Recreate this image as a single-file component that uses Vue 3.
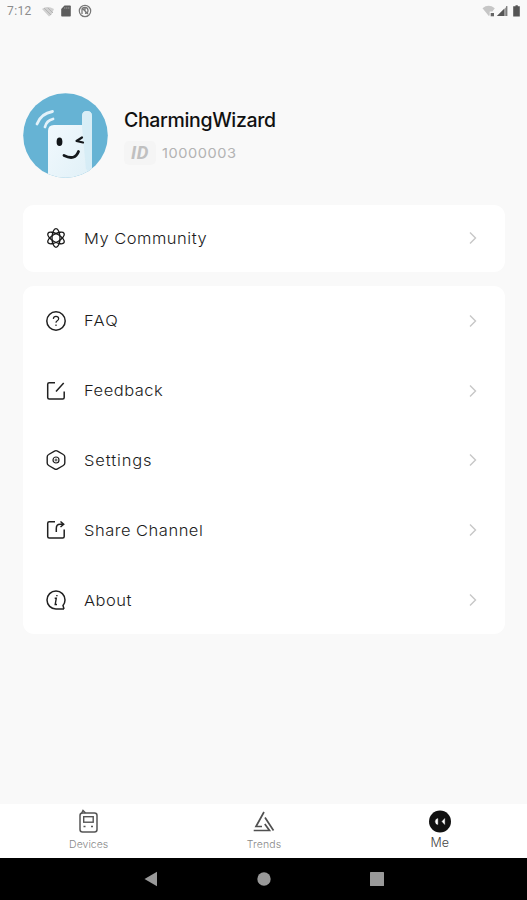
<script setup>
const items = [
  { key: 'faq', label: 'FAQ', width: 'w-faq' },
  { key: 'feedback', label: 'Feedback', width: 'w-feedback' },
  { key: 'settings', label: 'Settings', width: 'w-settings' },
  { key: 'share', label: 'Share Channel', width: 'w-share' },
  { key: 'about', label: 'About', width: 'w-about' },
]
</script>

<template>
  <div class="screen">
    <header class="status">
      <span class="time">7:12</span>
      <svg class="s-wifi" width="14" height="12" viewBox="0 0 14 12"><path d="M1 4Q6 0 13 4L10.500 9.500L8 11.500Z" fill="#d0d0d0" /><path d="M3 3l7 7M7 3l5 5" stroke="#b4b4b4" /></svg>
      <svg class="s-sd" width="10" height="12" viewBox="0 0 10 12"><path d="M3.500.500H9q.8 0 .8.8v9.400q0 .8-.8.8H1q-.8 0-.8-.8V4Z" fill="#5d5d5d" /><path d="M3.800 2v2M5.800 2v2M7.800 2v2" stroke="#999" stroke-width=".8" /></svg>
      <svg class="s-sync" width="14" height="14" viewBox="0 0 14 14" fill="none" stroke="#777"><circle cx="7" cy="7" r="5.700" stroke-width="1.200" /><path d="M4 10V5.500Q4 3.500 7 3.500t3 3-3 2.700M5 5l5 5M7 3v4" stroke-width="1.300" /></svg>
      <span class="spacer"></span>
      <svg width="41" height="14" viewBox="0 0 41 14">
        <path d="M.5 4.200Q6.500-.5 12.800 4.200L10.400 7.400H7.700v3.800L6.800 12Z" fill="#c6c6c6" />
        <rect x="8.700" y="9" width="3.300" height="3.300" fill="#666" />
        <path d="M15 12L25.300 2V12Z" fill="#999" /><path d="M15 12L22 5V12Z" fill="#555" /><path d="M24.700 2V12" stroke="#777" />
        <path d="M33.500 1.200h2.300v1h2V12.500h-6.600V2.200h2.300Z" fill="#555" />
      </svg>
    </header>

    <section class="profile">
      <svg class="avatar" width="85" height="85" viewBox="0 0 85 85">
        <defs>
          <clipPath id="disc"><circle cx="42.500" cy="42.500" r="42.300" /></clipPath>
          <linearGradient id="body" x1="0" y1="0" x2="1" y2="1"><stop offset="0" stop-color="#f3fafe" /><stop offset="1" stop-color="#e0f0f7" /></linearGradient>
        </defs>
        <g clip-path="url(#disc)">
          <path d="M0 0H85V85H0Z" fill="#66b3d4" />
          <path d="M25 38Q25 32 31 32H59V23Q59 18 64 18T69 23V85H25Z" fill="url(#body)" />
          <path d="M59 34V23Q59 18 64 18T69 23V82L63 76Z" fill="#d0e9f4" opacity=".65" />
        </g>
        <g fill="none" stroke="#e3f2fa" stroke-width="2.800" stroke-linecap="round"><path d="M14 31Q18 20.500 29.500 18.500M22 34Q23.500 27.500 30 26" /></g>
        <ellipse cx="36.500" cy="48.800" rx="2.900" ry="4.300" fill="#121619" />
        <g fill="none" stroke="#15191c" stroke-width="2.200" stroke-linecap="round" stroke-linejoin="round"><path d="M59 44.500L53.500 48L60 49.500" /><path d="M41 62.500Q52 68 55.500 58.500" stroke-width="2.800" /></g>
      </svg>
      <div class="who">
        <div class="name">CharmingWizard</div>
        <div class="idrow"><span class="badge">ID</span><span class="num">10000003</span></div>
      </div>
    </section>

    <main class="cards">
      <section class="card single">
        <div class="row">
          <svg class="icon" width="22" height="22" viewBox="0 0 22 22" fill="none" stroke="#171717" stroke-width="1.300">
            <ellipse cx="11" cy="11" rx="4" ry="9.300" /><ellipse cx="11" cy="11" rx="4" ry="9.300" transform="rotate(60 11 11)" /><ellipse cx="11" cy="11" rx="4" ry="9.300" transform="rotate(120 11 11)" />
          </svg>
          <span class="label w-community">My Community</span>
          <svg class="chevron" width="8" height="14" viewBox="0 0 8 14"><path d="M1 1.500L6.500 7L1 12.500" /></svg>
        </div>
      </section>
      <section class="card menu">
        <div v-for="item in items" :key="item.key" class="row">
          <svg class="icon" width="22" height="22" viewBox="0 0 22 22" fill="none" stroke="#202020" stroke-width="1.500">
            <template v-if="item.key === 'faq'">
              <circle cx="11" cy="11" r="9.200" /><path d="M8.300 8.900Q8.500 6.300 11 6.300T13.700 8.600Q13.700 10 12.300 10.700T11 12.800M11 14.500V16" stroke-width="1.200" />
            </template>
            <template v-else-if="item.key === 'feedback'">
              <path d="M10 2.700H4.200Q2.700 2.700 2.700 4.200V17.500Q2.700 19 4.200 19H17.700Q19.200 19 19.200 17.500V11.500M11 11.500L18.700 3" />
            </template>
            <template v-else-if="item.key === 'settings'">
              <path d="M9.500 2.100Q11 1.200 12.500 2.100L18.300 5.500Q19.800 6.300 19.800 8V14Q19.800 15.700 18.300 16.500L12.500 19.900Q11 20.800 9.500 19.900L3.700 16.500Q2.200 15.700 2.200 14V8Q2.200 6.300 3.700 5.500Z" stroke-width="1.400" /><circle cx="11" cy="11" r="3" stroke-width="1.200" /><path d="M11 9.500V12.500M9.500 11H12.500" stroke-width=".8" />
            </template>
            <template v-else-if="item.key === 'share'">
              <path d="M10 2.700H4.200Q2.700 2.700 2.700 4.200V17.500Q2.700 19 4.200 19H17.700Q19.200 19 19.200 17.500V10.500M11.300 13V9.500Q11.300 5.300 15 5.300H18M15.500 2.500L18.700 5.300L15.500 8" />
            </template>
            <template v-else>
              <path d="M19 20H11A9 9 0 1 1 20 11Q20 14 18 16.500L19 20" /><path d="M9.700 9.200H11.300L10.200 15.500H12M11.900 5.900V7.300" stroke-width="1.400" />
            </template>
          </svg>
          <span class="label" :class="item.width">{{ item.label }}</span>
          <svg class="chevron" width="8" height="14" viewBox="0 0 8 14"><path d="M1 1.500L6.500 7L1 12.500" /></svg>
        </div>
      </section>
    </main>

    <nav class="tabs">
      <div class="tab">
        <svg width="24" height="25" viewBox="0 0 24 25" fill="none" stroke="#555"><rect x="3" y="4" width="17" height="19" rx="2.500" stroke-width="1.500" /><path d="M4.500 4.500L6 1.500L8.500 4" stroke-width="1.400" /><rect x="6.700" y="7.700" width="9.500" height="5.500" stroke-width="1.400" /><path d="M6.500 17.500H8.500M14 17.500H16" stroke-width="1.500" /></svg>
        <span>Devices</span>
      </div>
      <div class="tab trends">
        <svg width="24" height="25" viewBox="0 0 24 25" fill="none" stroke="#505050" stroke-width="1.700"><path d="M12 3L4 17.500H10M1.700 21.500H17.500L12.800 15M13 8.500L21.500 21.500" /></svg>
        <span>Trends</span>
      </div>
      <div class="tab me">
        <svg width="24" height="25" viewBox="0 0 24 25"><circle cx="12" cy="12.500" r="11" fill="#111" /><path d="M9.800 9.500Q7.300 10 7.300 12.500T9.800 15.500ZM14 12.500L16.700 9.500V15.500Z" fill="#fff" stroke="#fff" stroke-width=".4" /></svg>
        <span>Me</span>
      </div>
    </nav>
    <footer class="system">
      <svg width="14" height="16" viewBox="0 0 14 16"><path d="M.5 8L13 .8V15.200Z" fill="#999" /></svg>
      <svg width="14" height="14" viewBox="0 0 14 14"><circle cx="7" cy="7" r="6.700" fill="#999" /></svg>
      <svg width="14" height="14" viewBox="0 0 14 14"><rect width="14" height="14" rx=".5" fill="#999" /></svg>
    </footer>
  </div>
</template>

<style>
body { margin: 0; background: #f9f9f9; }
</style>

<style scoped>
.screen { width: 527px; height: 900px; display: flex; flex-direction: column; background: #f9f9f9; font-family: Inter, "Liberation Sans", sans-serif; overflow: hidden; }
svg { display: block; flex: none; }
.status { height: 22px; box-sizing: border-box; display: flex; align-items: center; padding: 0 4px 0 7px; }
.time { width: 34px; font: 12px/22px Roboto, sans-serif; color: #8c8c8c; letter-spacing: .4px; }
.s-sd { margin-left: 6px; }
.s-sync { margin-left: 7px; }
.spacer { flex: 1; }
.profile { height: 85px; margin-top: 71px; padding-left: 23px; display: flex; gap: 16px; }
.avatar { margin-top: .4px; }
.who { padding-top: 12.500px; }
.name { height: 28px; line-height: 28px; font-size: 19.5px; font-weight: 450; color: #111; white-space: nowrap; letter-spacing: -.35px; }
.idrow { margin-top: 7px; display: flex; align-items: center; }
.badge { box-sizing: border-box; width: 32px; height: 24px; border-radius: 5px; background: #f5f5f5; color: #c0c0c0; font: italic 700 18.5px/25px Roboto, sans-serif; text-align: center; letter-spacing: .5px; }
.num { margin-left: 6px; font-size: 13.5px; line-height: 24px; color: #b3b3b3; transform: scaleX(1.08); transform-origin: left; letter-spacing: .5px; }
.cards { padding: 27px 22px 0 23px; display: flex; flex-direction: column; gap: 14px; }
.card { background: #fff; border-radius: 11px; }
.single { height: 67px; box-sizing: border-box; padding-bottom: 1px; display: flex; }
.menu { height: 348px; display: grid; grid-template-rows: repeat(5, 69.8px); }
.row { width: 100%; box-sizing: border-box; display: flex; align-items: center; padding: 0 28px 0 22px; }
.label { margin-left: 17px; padding-top: 1px; font-size: 15px; line-height: 24px; font-weight: 300; color: #1c1c1c; white-space: nowrap; letter-spacing: .46px; transform: scaleX(1.1); transform-origin: left; }
.w-faq { letter-spacing: 1.1px; }
.w-settings { letter-spacing: .8px; }
.chevron { margin-left: auto; fill: none; stroke: #c7c7c7; stroke-width: 1.4; }
.tabs { height: 54px; margin-top: auto; background: #fff; display: grid; grid-template-columns: repeat(3, 1fr); padding-left: 1px; }
.tab { display: flex; flex-direction: column; align-items: center; padding-top: 5px; font-size: 10.5px; line-height: 14px; font-weight: 300; color: #888; }
.tab span { margin-top: 4px; }
.trends span { letter-spacing: .15px; }
.me { padding-left: 1px; color: #444; font-size: 12.5px; }
.me span { margin-top: 2px; }
.system { height: 42px; box-sizing: border-box; display: flex; align-items: center; justify-content: center; gap: 99px; background: #000; }
</style>
